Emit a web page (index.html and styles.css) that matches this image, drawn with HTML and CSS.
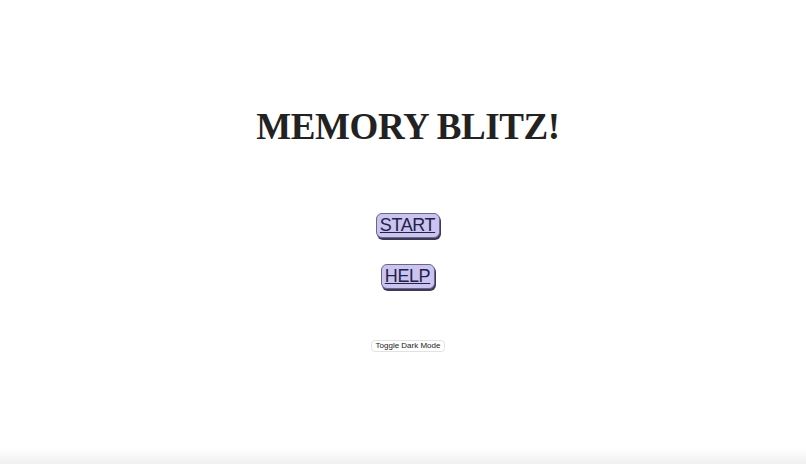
FILE: index.html
```html
<!DOCTYPE html>
<html>
<head>
<meta charset="utf-8">
<link rel="stylesheet" href="styles.css">
</head>
<body>
<main class="page">
  <h1 class="title">MEMORY BLITZ!</h1>
  <div class="menu">
    <a class="menu-btn" href="#">START</a>
    <a class="menu-btn" href="#">HELP</a>
  </div>
  <button class="toggle">Toggle Dark Mode</button>
</main>
<div class="bottom-fade"></div>
</body>
</html>
```

FILE: styles.css
```css
html, body {
  margin: 0;
  padding: 0;
  height: 100%;
  background: #ffffff;
}
body {
  position: relative;
  overflow: hidden;
}
.page {
  display: flex;
  flex-direction: column;
  align-items: center;
  padding-top: 105px;
  padding-left: 10px;
}
.title {
  margin: 0;
  font-family: "Liberation Serif", "Times New Roman", serif;
  font-weight: bold;
  font-size: 37px;
  line-height: 44px;
  color: #222222;
  letter-spacing: -0.4px;
}
.menu {
  display: flex;
  flex-direction: column;
  align-items: center;
  gap: 26px;
  margin-top: 64px;
}
.menu-btn {
  display: block;
  font-family: "Liberation Sans", Arial, sans-serif;
  font-size: 18px;
  line-height: 23px;
  letter-spacing: -0.4px;
  color: #222244;
  text-decoration: underline;
  background: #cbc4f1;
  border: 1px solid #6a6490;
  border-radius: 6px;
  padding: 0 4px 0 3px;
  box-shadow: 1px 2px 0 #3d3a55;
}
.toggle {
  margin-top: 51px;
  font-family: "Liberation Sans", Arial, sans-serif;
  font-size: 8px;
  line-height: 10px;
  color: #222222;
  background: #ffffff;
  border: 1px solid #e2e2e2;
  border-radius: 4px;
  padding: 0 4px;
}
.bottom-fade {
  position: absolute;
  left: 0;
  right: 0;
  bottom: 0;
  height: 16px;
  background: linear-gradient(#ffffff, #f0f0f0);
}
```
